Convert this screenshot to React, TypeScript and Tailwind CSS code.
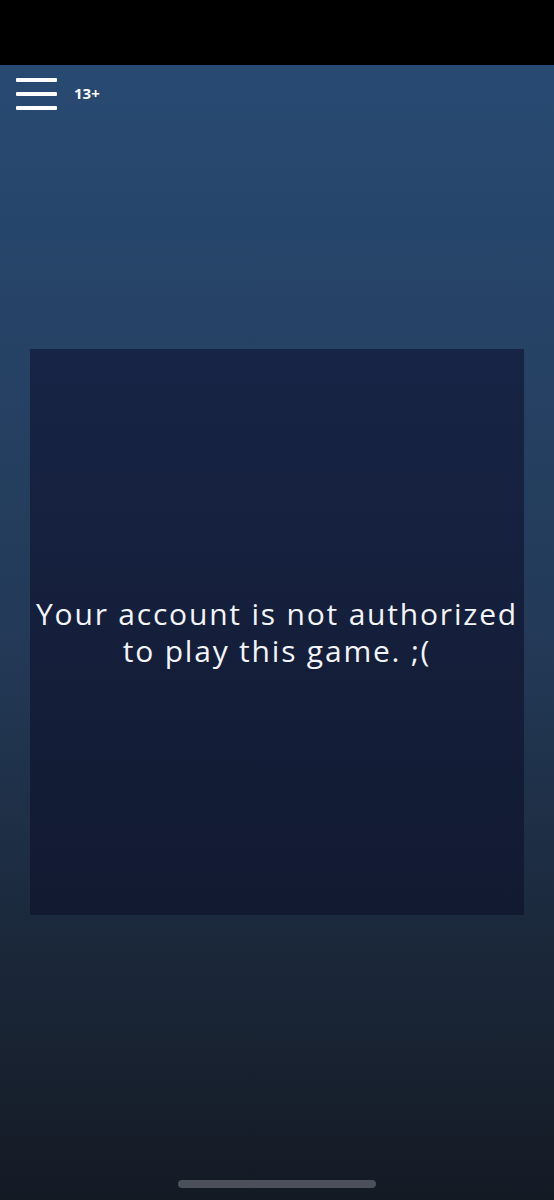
import React from 'react';

export default function App() {
  return (
    <div className="flex h-[1200px] w-[554px] flex-col overflow-hidden bg-black font-['Open_Sans',sans-serif]">
      <div className="h-[65px] shrink-0 bg-black" />
      <div className="relative flex flex-1 flex-col bg-gradient-to-b from-[#284a72] via-[#233a58] to-[#141a24]">
        {/* top bar */}
        <div className="flex h-[55px] items-center gap-[17px] pl-4">
          <div className="flex w-[41px] flex-col gap-[10px] pt-[2px]">
            <span className="h-[4px] rounded-[1px] bg-white" />
            <span className="h-[4px] rounded-[1px] bg-white" />
            <span className="h-[4px] rounded-[1px] bg-white" />
          </div>
          <span className="pt-[2px] font-['Open_Sans',sans-serif] text-[15px] font-bold text-white">13+</span>
        </div>

        {/* game panel */}
        <div className="ml-[30px] mt-[229px] flex h-[566px] w-[494px] items-center justify-center bg-gradient-to-b from-[#172445] to-[#121a31]">
          <p className="text-center text-[30px] leading-[37px] tracking-[1.8px] text-[#f2f4f7]">
            Your account is not authorized
            <br />
            to play this game. ;(
          </p>
        </div>

        {/* home indicator */}
        <div className="absolute bottom-[12px] left-[178px] h-[8px] w-[198px] rounded-full bg-[#4b505a]" />
      </div>
    </div>
  );
}
